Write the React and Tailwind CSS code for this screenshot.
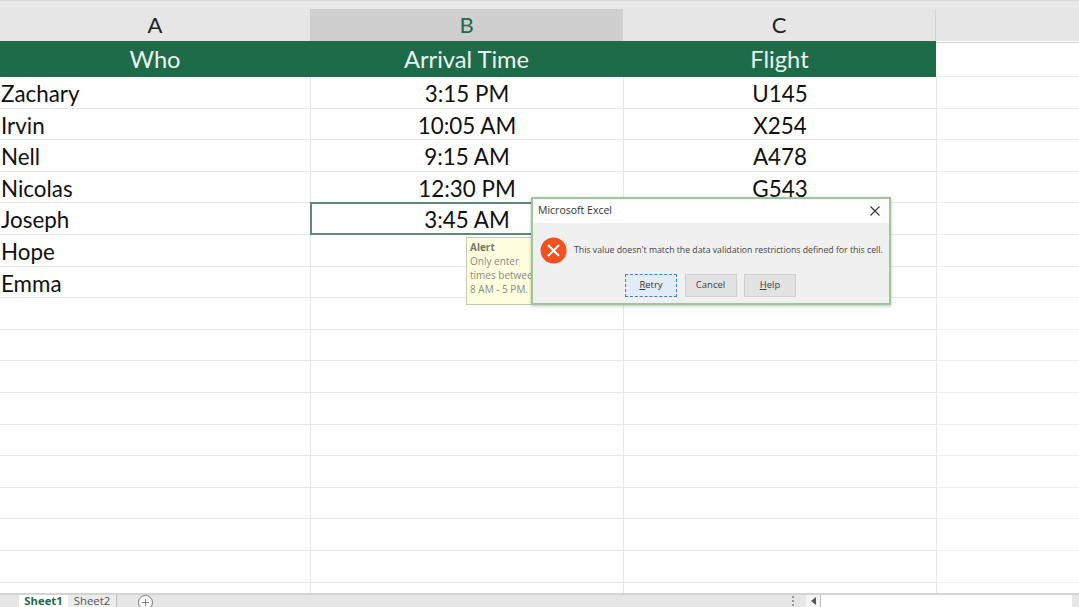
import { Plus } from 'lucide-react'

const people = [
  ['Zachary', '3:15 PM', 'U145'],
  ['Irvin', '10:05 AM', 'X254'],
  ['Nell', '9:15 AM', 'A478'],
  ['Nicolas', '12:30 PM', 'G543'],
  ['Joseph', '3:45 AM', ''],
  ['Hope', '', ''],
  ['Emma', '', ''],
]

const emptyRows = Array.from({ length: 10 }, (_, i) => i)

function Row({ who, time, flight, selected }) {
  return (
    <div className="grid grid-cols-[311px_313px_313px_142px] grid-rows-[31.6px] text-[22.4px] leading-[33px] text-[#111]">
      <div className="border-r border-b border-[#e6e6e6] pl-[1px] whitespace-nowrap">{who}</div>
      <div className={selected ? 'relative border-r border-b border-[#e6e6e6] text-center' : 'border-r border-b border-[#e6e6e6] text-center'}>
        {time}
        {selected && <div className="absolute -left-[1px] -top-[1px] right-0 -bottom-[1px] border-2 border-[#5f8a78]"></div>}
      </div>
      <div className="border-r border-b border-[#e6e6e6] text-center">{flight}</div>
      <div className="border-b border-[#eeeeee]"></div>
    </div>
  )
}

function DialogButton({ children, focused }) {
  return (
    <div
      className={
        focused
          ? 'w-[52px] h-[23px] flex items-center justify-center border border-dashed border-[#3f7fc0] bg-[#e1ecf8] text-[9.5px] text-[#333]'
          : 'w-[52px] h-[23px] flex items-center justify-center border border-[#cfcfcf] bg-[#e2e2e2] text-[9.5px] text-[#444]'
      }
    >
      {children}
    </div>
  )
}

export default function App() {
  return (
    <div className="relative w-[1079px] h-[607px] overflow-hidden bg-white font-['Lato',sans-serif]">
      {/* column letters */}
      <div className="h-[9px] bg-[#e8e8e8] border-t border-[#d8d8d8]"></div>
      <div className="grid grid-cols-[310px_313px_313px_143px] h-[32px] bg-[#e6e6e6] text-[22px] leading-[32px] text-center text-[#222]">
        <div className="border-b border-[#c4c4c4]">A</div>
        <div className="bg-[#cfcfcf] text-[#1f6b4a] border-b-2 border-[#5f8a78]">B</div>
        <div className="border-r border-b border-[#d4d4d4]">C</div>
        <div className="border-b border-[#d4d4d4]"></div>
      </div>

      {/* table header */}
      <div className="grid grid-cols-[936px_143px] h-[36px]">
        <div className="grid grid-cols-[310px_313px_313px] bg-[#1e6b4a] text-[23.7px] leading-[36px] text-center text-[#eaf3ee]">
          <div>Who</div>
          <div>Arrival Time</div>
          <div>Flight</div>
        </div>
        <div className="border-b border-[#eeeeee]"></div>
      </div>

      {/* rows */}
      <div>
        {people.map((p, i) => (
          <Row key={p[0]} who={p[0]} time={p[1]} flight={p[2]} selected={i === 4} />
        ))}
        {emptyRows.map((i) => (
          <Row key={i} who="" time="" flight="" />
        ))}
      </div>

      {/* sheet tabs */}
      <div className="absolute left-0 right-0 bottom-0 h-[14px] flex bg-[#e6e6e6] border-t-2 border-[#d4d4d4] text-[11.3px] leading-[12px] font-['Open_Sans',sans-serif]">
        <div className="w-[19px]"></div>
        <div className="w-[49px] bg-white text-center font-bold text-[#1f6b4a]">Sheet1</div>
        <div className="w-[49px] bg-[#ececec] border-r border-[#bdbdbd] text-center text-[#555]">Sheet2</div>
        <div className="ml-[21px] w-[15px] h-[15px] rounded-full border border-[#777] flex items-center justify-center bg-white">
          <Plus size={11} strokeWidth={1.5} className="text-[#555]" />
        </div>
        <div className="ml-auto flex items-center">
          <div className="w-[26px] flex flex-col items-center gap-[2px]">
            <span className="w-[2px] h-[2px] bg-[#999]"></span>
            <span className="w-[2px] h-[2px] bg-[#999]"></span>
            <span className="w-[2px] h-[2px] bg-[#999]"></span>
          </div>
          <div className="w-[14px] h-full bg-[#f4f4f4] flex items-center justify-center">
            <span className="w-0 h-0 border-y-[4px] border-y-transparent border-r-[5px] border-r-[#555]"></span>
          </div>
          <div className="w-[252px] h-full bg-white border-l border-[#bdbdbd]"></div>
          <div className="w-[7px]"></div>
        </div>
      </div>

      {/* input message tooltip */}
      <div className="absolute left-[466px] top-[237px] w-[80px] h-[68px] overflow-hidden bg-[#ffffdf] border border-[#c8c8b0] pl-[3px] pt-[2px] text-[10px] leading-[14px] font-['Open_Sans',sans-serif] text-[#8a8a80] whitespace-nowrap">
        <div className="font-bold text-[#77776f]">Alert</div>
        <div>Only enter</div>
        <div>times between</div>
        <div>8 AM - 5 PM.</div>
      </div>

      {/* error dialog */}
      <div className="absolute left-[531px] top-[197px] w-[360px] h-[108px] flex flex-col bg-[#f0f0f0] border-2 border-[#9cc79c] shadow-[0_1px_3px_rgba(0,0,0,0.25)] font-['Open_Sans',sans-serif]">
        <div className="h-[24px] shrink-0 bg-white flex items-center justify-between pl-[5px] pr-[9px] text-[10.5px] text-[#333]">
          <span>Microsoft Excel</span>
          <svg width="10" height="10" viewBox="0 0 10 10" className="text-[#333]">
            <path d="M0.5 0.5 9.5 9.5M9.5 0.5 0.5 9.5" stroke="currentColor" strokeWidth="1.1" fill="none" />
          </svg>
        </div>
        <div className="flex items-center h-[31px] mt-[12px] pl-[7px] gap-[7px]">
          <svg width="27" height="27" viewBox="0 0 27 27" className="shrink-0">
            <circle cx="13.5" cy="13.5" r="13" fill="#f4511e" />
            <path d="M8 8 19 19M19 8 8 19" stroke="#fff" strokeWidth="2" fill="none" />
          </svg>
          <span className="text-[8.72px] text-[#444] whitespace-nowrap">
            This value doesn't match the data validation restrictions defined for this cell.
          </span>
        </div>
        <div className="flex gap-[7.5px] ml-[92px] mt-[8px]">
          <DialogButton focused>
            <span><span className="underline">R</span>etry</span>
          </DialogButton>
          <DialogButton>Cancel</DialogButton>
          <DialogButton>
            <span><span className="underline">H</span>elp</span>
          </DialogButton>
        </div>
      </div>
    </div>
  )
}
